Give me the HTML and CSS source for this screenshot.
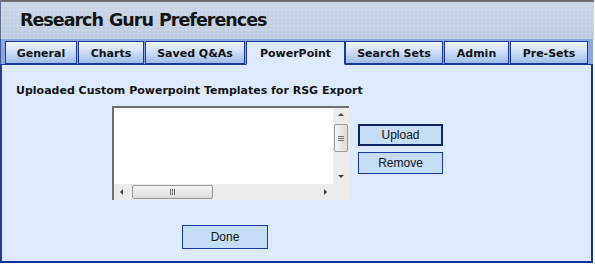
FILE: index.html
```html
<!DOCTYPE html>
<html>
<head>
<meta charset="utf-8">
<link rel="stylesheet" href="styles.css">
</head>
<body>
<div class="window">
  <div class="header"><h1 class="title">Research Guru Preferences</h1></div>
  <div class="tabstrip">
    <div class="tab w-general">General</div>
    <div class="tab w-charts">Charts</div>
    <div class="tab w-saved">Saved Q&amp;As</div>
    <div class="tab active w-ppt">PowerPoint</div>
    <div class="tab w-search">Search Sets</div>
    <div class="tab w-admin">Admin</div>
    <div class="tab w-presets">Pre-Sets</div>
  </div>
  <div class="panel">
    <div class="label">Uploaded Custom Powerpoint Templates for RSG Export</div>
    <div class="row">
      <div class="listbox">
        <div class="list-area"></div>
        <div class="vscroll">
          <span class="arrow up"></span>
          <span class="vthumb"><i></i><i></i><i></i></span>
          <span class="arrow down"></span>
        </div>
        <div class="hscroll">
          <span class="arrow left"></span>
          <span class="hthumb"><i></i><i></i><i></i></span>
          <span class="arrow right"></span>
        </div>
        <div class="corner"></div>
      </div>
      <div class="buttons">
        <button class="btn btn-focus">Upload</button>
        <button class="btn">Remove</button>
      </div>
    </div>
    <div class="done-row"><button class="btn btn-done">Done</button></div>
  </div>
</div>
</body>
</html>
```
FILE: styles.css
```css
html, body {
  margin: 0;
  padding: 0;
  background: #ffffff;
}
.window {
  width: 593px;
  height: 263px;
  display: flex;
  flex-direction: column;
  font-family: "DejaVu Sans", Verdana, sans-serif;
}
.header {
  height: 39px;
  border-top: 2px solid #6f6f6f;
  border-left: 1px solid #5d6f8c;
  width: 594px;
  box-sizing: border-box;
  background-color: #bccbe0;
  background-image:
    linear-gradient(180deg, rgba(210,220,234,0.6) 0%, rgba(180,196,220,0.2) 100%),
    repeating-linear-gradient(90deg, rgba(255,255,255,0.12) 0 2px, rgba(0,0,0,0) 2px 4px),
    repeating-linear-gradient(0deg, rgba(255,255,255,0.12) 0 2px, rgba(0,0,0,0) 2px 4px);
  display: flex;
  align-items: flex-start;
}
.title {
  margin: 8px 0 0 19px;
  font-size: 17.5px;
  font-weight: bold;
  color: #141414;
  letter-spacing: -1px;
  word-spacing: 1px;
}
.tabstrip {
  height: 25px;
  box-sizing: border-box;
  background: #8aa8e0;
  border-left: 1px solid #3b559a;
  display: flex;
  align-items: flex-end;
  padding-left: 4px;
  gap: 1px;
}
.tab {
  height: 23px;
  box-sizing: border-box;
  border: 1px solid #1c3a9a;
  border-bottom: 1px solid #1c3a9a;
  background: linear-gradient(180deg, #f2f6fd 0%, #d4e2f8 40%, #9fbcec 100%);
  font-size: 11px;
  font-weight: bold;
  color: #121212;
  display: flex;
  align-items: center;
  justify-content: center;
  padding-top: 1px;
}
.tab.active {
  background: #dde9fd;
  border-bottom-color: #dde9fd;
  height: 24px;
  margin-bottom: -1px;
  position: relative;
  z-index: 1;
}
.w-general { width: 72px; }
.w-charts { width: 66px; }
.w-saved { width: 100px; }
.w-ppt { width: 99px; margin-right: -1px; }
.w-search { width: 98px; }
.w-admin { width: 65px; }
.w-presets { width: 78px; }
.panel {
  flex: 1;
  background: #dde9fd;
  border-left: 2px solid #1f3c8e;
  border-right: 2px solid #123097;
  border-bottom: 2px solid #123097;
  border-top: 1px solid #1c3a9a;
  display: flex;
  flex-direction: column;
}
.label {
  margin: 19px 0 0 14px;
  font-size: 11px;
  font-weight: bold;
  color: #141414;
  height: 13px;
  line-height: 13px;
}
.row {
  display: flex;
  margin: 9px 0 0 110px;
  align-items: flex-start;
}
.listbox {
  width: 237px;
  height: 94px;
  box-sizing: border-box;
  border-top: 2px solid #707070;
  border-left: 2px solid #707070;
  background: #ffffff;
  display: grid;
  grid-template-columns: 1fr 16px;
  grid-template-rows: 1fr 16px;
}
.list-area { background: #ffffff; }
.vscroll {
  background: #ebebeb;
  display: flex;
  flex-direction: column;
  align-items: center;
  position: relative;
}
.hscroll {
  background: #ebebeb;
  display: flex;
  align-items: center;
  position: relative;
}
.corner { background: #ebebeb; }
.arrow {
  width: 0;
  height: 0;
  position: absolute;
}
.arrow.up {
  top: 5px; left: 5px;
  border-left: 3px solid transparent;
  border-right: 3px solid transparent;
  border-bottom: 3px solid #404040;
}
.arrow.down {
  bottom: 6px; left: 5px;
  border-left: 3px solid transparent;
  border-right: 3px solid transparent;
  border-top: 3px solid #404040;
}
.arrow.left {
  left: 6px; top: 5px;
  border-top: 3px solid transparent;
  border-bottom: 3px solid transparent;
  border-right: 3px solid #404040;
}
.arrow.right {
  right: 6px; top: 5px;
  border-top: 3px solid transparent;
  border-bottom: 3px solid transparent;
  border-left: 3px solid #404040;
}
.vthumb {
  position: absolute;
  top: 16px;
  left: 1px;
  width: 14px;
  height: 28px;
  box-sizing: border-box;
  border: 1px solid #9a9a9a;
  border-radius: 2px;
  background: linear-gradient(90deg, #f4f4f4, #dcdcdc);
  display: flex;
  flex-direction: column;
  align-items: center;
  justify-content: center;
  gap: 1px;
}
.vthumb i {
  display: block;
  width: 6px;
  height: 1px;
  background: #707070;
}
.hthumb {
  position: absolute;
  left: 18px;
  top: 1px;
  width: 81px;
  height: 14px;
  box-sizing: border-box;
  border: 1px solid #9a9a9a;
  border-radius: 2px;
  background: linear-gradient(180deg, #f4f4f4, #dcdcdc);
  display: flex;
  align-items: center;
  justify-content: center;
  gap: 1px;
}
.hthumb i {
  display: block;
  width: 1px;
  height: 6px;
  background: #707070;
}
.buttons {
  display: flex;
  flex-direction: column;
  gap: 6px;
  margin: 18px 0 0 9px;
}
.btn {
  width: 85px;
  height: 22px;
  box-sizing: border-box;
  background: #c5ddf5;
  border: 1px solid #1b3aa6;
  font-family: "Liberation Sans", Arial, sans-serif;
  font-size: 12px;
  color: #111111;
  padding: 0;
  margin: 0;
}
.btn-focus {
  border: 2px solid #0c2466;
}
.done-row {
  margin: 25px 0 0 180px;
}
.btn-done {
  width: 86px;
  height: 24px;
}
```
